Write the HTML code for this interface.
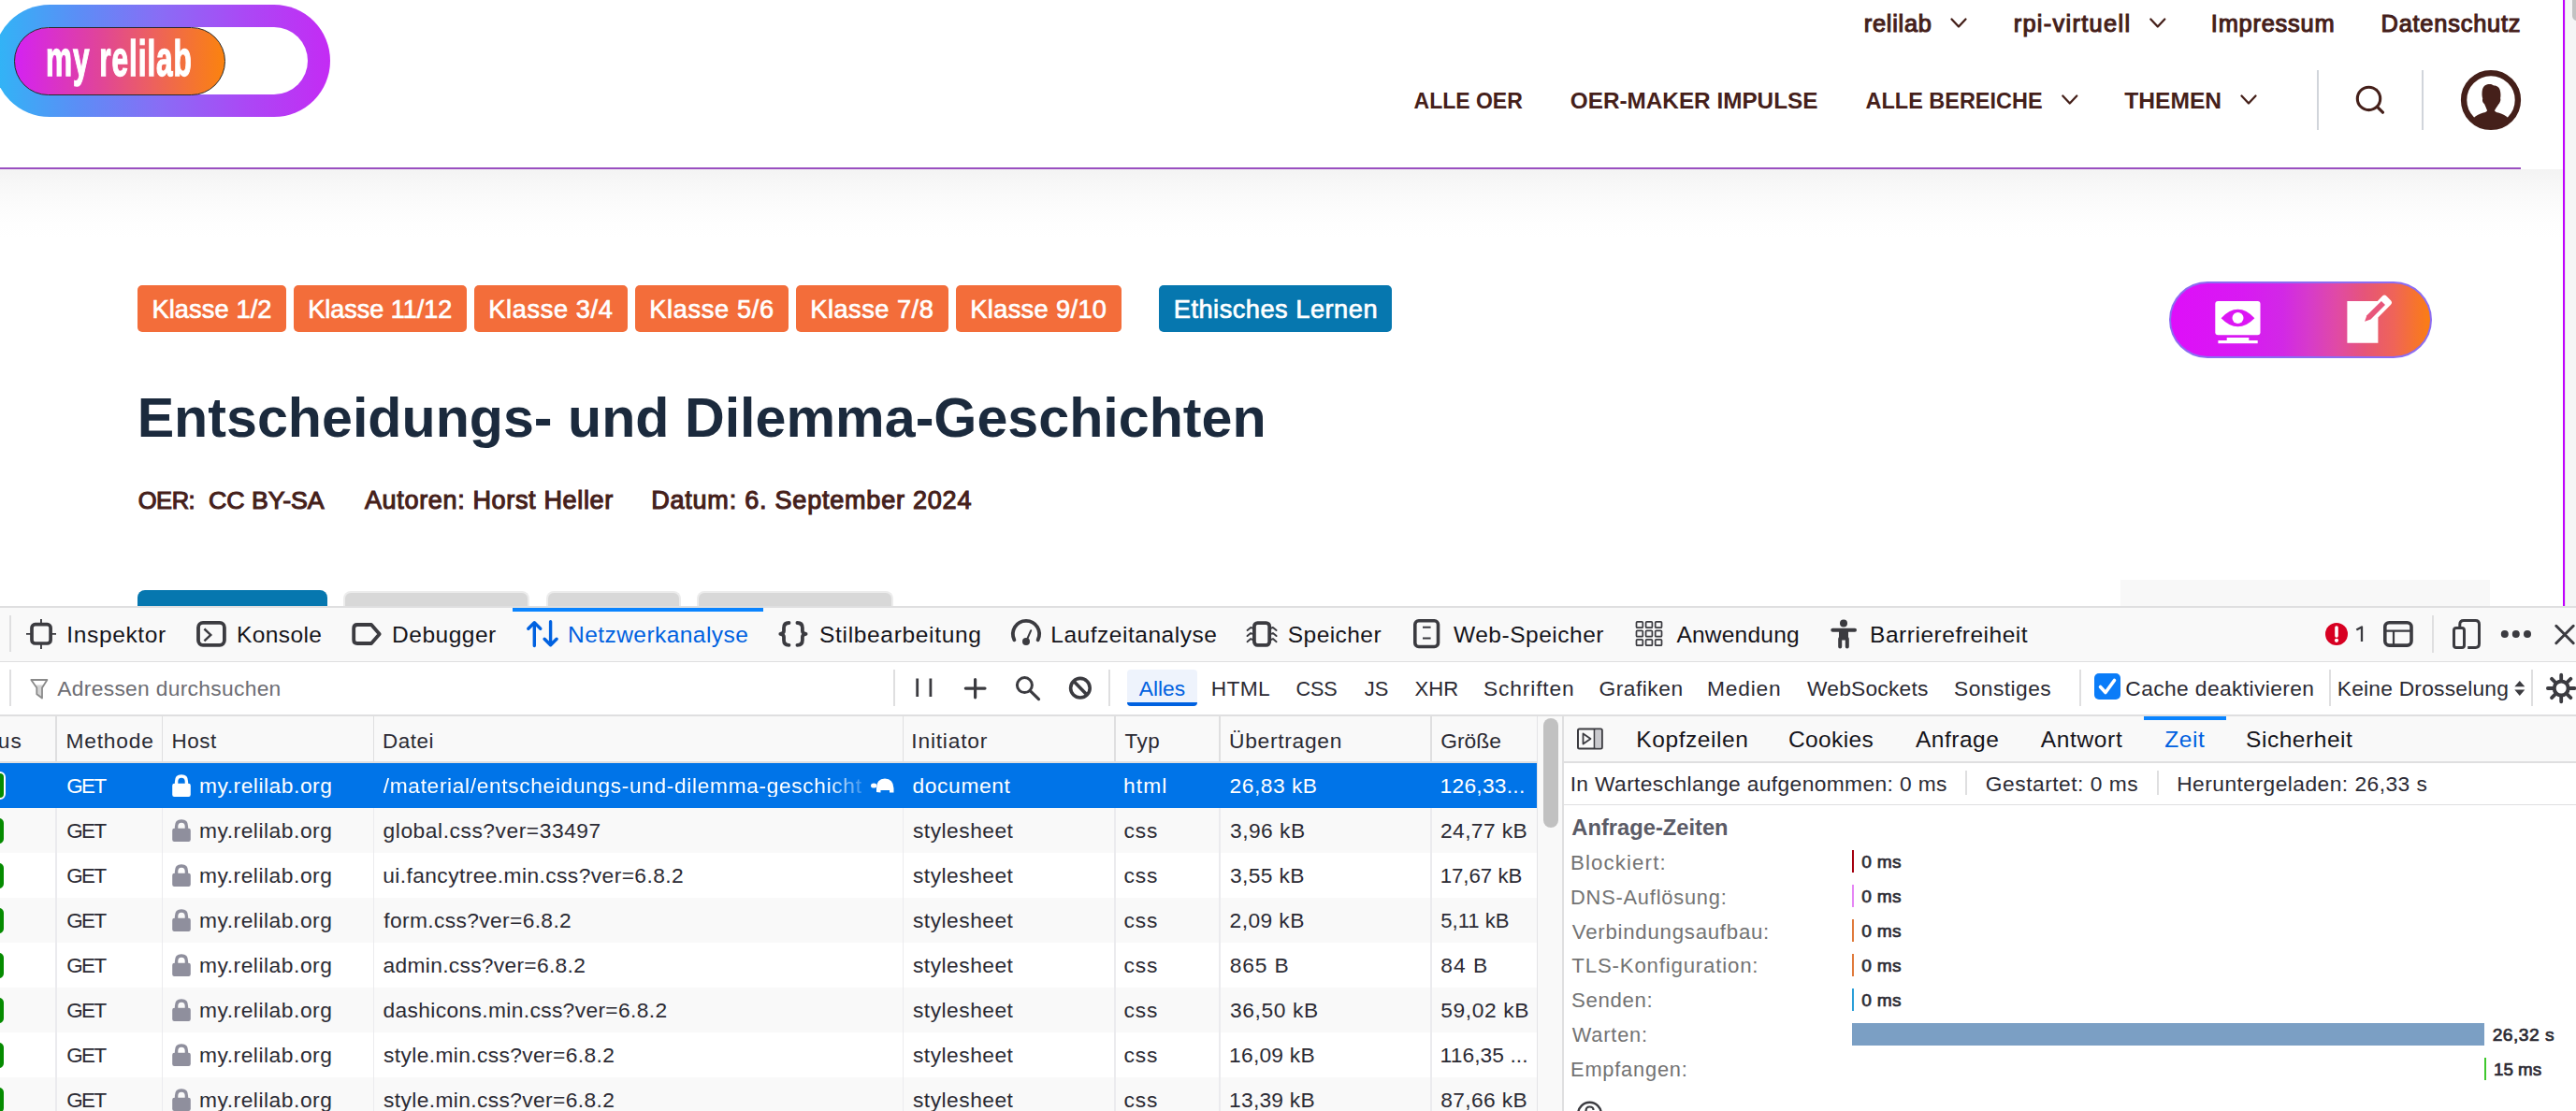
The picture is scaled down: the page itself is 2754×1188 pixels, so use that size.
<!DOCTYPE html>
<html><head><meta charset="utf-8"><style>
html,body{margin:0;padding:0;background:#fff}
#root{position:relative;width:2754px;height:1188px;overflow:hidden;background:#fff;font-family:"Liberation Sans",sans-serif}
.b{position:absolute}
.t{position:absolute;white-space:pre;font-family:"Liberation Sans",sans-serif}
</style></head><body><div id="root">
<div class="b" style="left:0px;top:181px;width:2740px;height:467px;background:linear-gradient(#f3f3f3 0px,#f7f7f7 14px,#fafafa 28px,#fcfcfc 42px,#fefefe 58px,#ffffff 75px);"></div>
<div class="b" style="left:0px;top:179px;width:2695px;height:2px;background:#9a4fc0;"></div>
<div class="b" style="left:2740px;top:0px;width:2px;height:648px;background:#c000ff;"></div>
<div class="b" style="left:2742px;top:0px;width:12px;height:648px;background:#f5f5f6;border-left:1px solid #e6e6e8;box-sizing:border-box"></div>
<div class="b" style="left:2749.7px;top:-12px;width:10px;height:34px;background:#c2c2c2;border-radius:5px"></div>
<div class="b" style="left:-7px;top:5px;width:360px;height:119.5px;background:linear-gradient(90deg,#2fb6f6 0%,#5b8ef6 25%,#8a6cf5 50%,#ab48f5 75%,#c42bf4 100%);border-radius:60px"></div>
<div class="b" style="left:17px;top:29px;width:311.5px;height:72px;background:#ffffff;border-radius:36px"></div>
<div class="b" style="left:15px;top:28.5px;width:226px;height:73px;background:linear-gradient(90deg,#d422f2 0%,#e0449a 40%,#ec6060 65%,#fb830e 100%);border-radius:37px;border:1px solid #2a2a2a;box-sizing:border-box"></div>
<div class="t" style="left:48.5px;top:34.5px;font-size:54px;line-height:54px;font-weight:700;color:#fff;transform-origin:0 0;transform:scaleX(0.585);-webkit-text-stroke:1.4px #fff;letter-spacing:1.6px">my relilab</div>
<div class="b" style="left:2477.1px;top:74.8px;width:1.8px;height:64px;background:#d1d5db;"></div>
<div class="b" style="left:2589.2px;top:74.8px;width:1.8px;height:64px;background:#d1d5db;"></div>
<div class="b" style="left:147.2px;top:305px;width:158.7px;height:49.5px;background:#f36d3a;border-radius:5px"></div>
<div class="b" style="left:314px;top:305px;width:184.7px;height:49.5px;background:#f36d3a;border-radius:5px"></div>
<div class="b" style="left:507px;top:305px;width:163.89999999999998px;height:49.5px;background:#f36d3a;border-radius:5px"></div>
<div class="b" style="left:679px;top:305px;width:163.79999999999995px;height:49.5px;background:#f36d3a;border-radius:5px"></div>
<div class="b" style="left:851px;top:305px;width:162.5px;height:49.5px;background:#f36d3a;border-radius:5px"></div>
<div class="b" style="left:1022px;top:305px;width:176.70000000000005px;height:49.5px;background:#f36d3a;border-radius:5px"></div>
<div class="b" style="left:1239px;top:305px;width:248.9px;height:49.8px;background:#0677af;border-radius:5px"></div>
<div class="b" style="left:147.3px;top:631.2px;width:202.7px;height:20px;background:#0677af;border-radius:8px 8px 0 0"></div>
<div class="b" style="left:366.7px;top:631.5px;width:199.8px;height:20px;background:#d8d8d8;border-radius:8px 8px 0 0;border:2px solid #ececec;border-bottom:0;box-sizing:border-box"></div>
<div class="b" style="left:583.6px;top:631.5px;width:144.39999999999998px;height:20px;background:#d8d8d8;border-radius:8px 8px 0 0;border:2px solid #ececec;border-bottom:0;box-sizing:border-box"></div>
<div class="b" style="left:745px;top:631.5px;width:209.60000000000002px;height:20px;background:#d8d8d8;border-radius:8px 8px 0 0;border:2px solid #ececec;border-bottom:0;box-sizing:border-box"></div>
<div class="b" style="left:2267px;top:619.8px;width:395px;height:30px;background:#f8f8f8;"></div>
<div class="b" style="left:2319.4px;top:300.7px;width:280.7px;height:82.3px;background:linear-gradient(90deg,#de0ff9 0%,#d81af2 28%,#d228e6 43%,#d73cc8 54%,#e04aa5 64%,#e65578 75%,#ef6458 86%,#fb7e12 100%) padding-box, #8c6cf2 border-box;border-radius:42px;border:2px solid transparent;box-sizing:border-box"></div>
<div class="b" style="left:0px;top:648px;width:2754px;height:540px;background:#ffffff;"></div>
<div class="b" style="left:0px;top:648.3px;width:2754px;height:1.8px;background:#dfdfe0;"></div>
<div class="b" style="left:0px;top:650px;width:2754px;height:56.6px;background:#f9f9f9;"></div>
<div class="b" style="left:0px;top:706.6px;width:2754px;height:1.5px;background:#dfdfe0;"></div>
<div class="b" style="left:0px;top:764px;width:2754px;height:1.6px;background:#dfdfe0;"></div>
<div class="b" style="left:0px;top:765.6px;width:1642.5px;height:48.3px;background:#f9f9f9;"></div>
<div class="b" style="left:0px;top:813.9px;width:1642.5px;height:2.1px;background:#dfdfe0;"></div>
<div class="b" style="left:0px;top:816px;width:1642.5px;height:48px;background:#0074e8;"></div>
<div class="b" style="left:0px;top:864px;width:1642.5px;height:48px;background:#f9f9f9;"></div>
<div class="b" style="left:0px;top:912px;width:1642.5px;height:48px;background:#ffffff;"></div>
<div class="b" style="left:0px;top:960px;width:1642.5px;height:48px;background:#f9f9f9;"></div>
<div class="b" style="left:0px;top:1008px;width:1642.5px;height:48px;background:#ffffff;"></div>
<div class="b" style="left:0px;top:1056px;width:1642.5px;height:48px;background:#f9f9f9;"></div>
<div class="b" style="left:0px;top:1104px;width:1642.5px;height:48px;background:#ffffff;"></div>
<div class="b" style="left:0px;top:1152px;width:1642.5px;height:48px;background:#f9f9f9;"></div>
<div class="b" style="left:59.4px;top:765.6px;width:1.6px;height:48.3px;background:#dfdfe0;"></div>
<div class="b" style="left:59.4px;top:864px;width:1.6px;height:324px;background:#ebebee;"></div>
<div class="b" style="left:172.6px;top:765.6px;width:1.6px;height:48.3px;background:#dfdfe0;"></div>
<div class="b" style="left:172.6px;top:864px;width:1.6px;height:324px;background:#ebebee;"></div>
<div class="b" style="left:398.5px;top:765.6px;width:1.6px;height:48.3px;background:#dfdfe0;"></div>
<div class="b" style="left:398.5px;top:864px;width:1.6px;height:324px;background:#ebebee;"></div>
<div class="b" style="left:964.9px;top:765.6px;width:1.6px;height:48.3px;background:#dfdfe0;"></div>
<div class="b" style="left:964.9px;top:864px;width:1.6px;height:324px;background:#ebebee;"></div>
<div class="b" style="left:1191px;top:765.6px;width:1.6px;height:48.3px;background:#dfdfe0;"></div>
<div class="b" style="left:1191px;top:864px;width:1.6px;height:324px;background:#ebebee;"></div>
<div class="b" style="left:1303.2px;top:765.6px;width:1.6px;height:48.3px;background:#dfdfe0;"></div>
<div class="b" style="left:1303.2px;top:864px;width:1.6px;height:324px;background:#ebebee;"></div>
<div class="b" style="left:1529.3px;top:765.6px;width:1.6px;height:48.3px;background:#dfdfe0;"></div>
<div class="b" style="left:1529.3px;top:864px;width:1.6px;height:324px;background:#ebebee;"></div>
<div class="b" style="left:1642.5px;top:765.6px;width:28px;height:422.4px;background:#f9f9f9;"></div>
<div class="b" style="left:1642.5px;top:765.6px;width:1.2px;height:422.4px;background:#e4e4e6;"></div>
<div class="b" style="left:1650.2px;top:768px;width:15.6px;height:117px;background:#c1c1c1;border-radius:8px"></div>
<div class="b" style="left:1670.4px;top:765.6px;width:1.7px;height:422.4px;background:#dfdfe0;"></div>
<div class="b" style="left:1672.1px;top:765.6px;width:1082px;height:48.6px;background:#f9f9f9;"></div>
<div class="b" style="left:1672.1px;top:814.2px;width:1082px;height:1.8px;background:#dfdfe0;"></div>
<div class="b" style="left:1672.1px;top:859.6px;width:1082px;height:1.6px;background:#dfdfe0;"></div>
<div class="b" style="left:2101.3px;top:824px;width:1.6px;height:26px;background:#dfdfe0;"></div>
<div class="b" style="left:2306.2px;top:824px;width:1.6px;height:26px;background:#dfdfe0;"></div>
<div class="b" style="left:2292px;top:766px;width:88px;height:3.8px;background:#0a84ff;"></div>
<div class="b" style="left:548px;top:650px;width:268px;height:3.8px;background:#0a84ff;"></div>
<div class="b" style="left:10.2px;top:658px;width:1.6px;height:39px;background:#dfdfe0;"></div>
<div class="b" style="left:2600.3px;top:658px;width:1.6px;height:39.60000000000002px;background:#dfdfe0;"></div>
<div class="b" style="left:10.2px;top:716px;width:1.6px;height:39.39999999999998px;background:#dfdfe0;"></div>
<div class="b" style="left:955.2px;top:716px;width:1.6px;height:39.39999999999998px;background:#dfdfe0;"></div>
<div class="b" style="left:1185.3px;top:716px;width:1.6px;height:39.39999999999998px;background:#dfdfe0;"></div>
<div class="b" style="left:2223px;top:716px;width:1.6px;height:39.39999999999998px;background:#dfdfe0;"></div>
<div class="b" style="left:2490.1px;top:716px;width:1.6px;height:39.39999999999998px;background:#dfdfe0;"></div>
<div class="b" style="left:2706.3px;top:716px;width:1.6px;height:39.39999999999998px;background:#dfdfe0;"></div>
<div class="b" style="left:1204.8px;top:715.9px;width:75px;height:38.9px;background:#eef3fc;border-radius:4px"></div>
<div class="b" style="left:1204.8px;top:750.8px;width:75px;height:4.1px;background:#0061e0;border-radius:0 0 4px 4px"></div>
<div class="b" style="left:2239px;top:720px;width:27.7px;height:27.7px;background:#0a7cf8;border-radius:5px"></div>
<div class="b" style="left:-14px;top:825.3px;width:19.7px;height:30.2px;background:#058b00;border-radius:6px;border:2px solid #fff;box-sizing:border-box"></div>
<div class="b" style="left:-14px;top:874.9px;width:18.2px;height:26.7px;background:#058b00;border-radius:5px"></div>
<div class="b" style="left:-14px;top:922.9px;width:18.2px;height:26.7px;background:#058b00;border-radius:5px"></div>
<div class="b" style="left:-14px;top:970.9px;width:18.2px;height:26.7px;background:#058b00;border-radius:5px"></div>
<div class="b" style="left:-14px;top:1018.9px;width:18.2px;height:26.7px;background:#058b00;border-radius:5px"></div>
<div class="b" style="left:-14px;top:1066.9px;width:18.2px;height:26.7px;background:#058b00;border-radius:5px"></div>
<div class="b" style="left:-14px;top:1114.9px;width:18.2px;height:26.7px;background:#058b00;border-radius:5px"></div>
<div class="b" style="left:-14px;top:1162.9px;width:18.2px;height:26.7px;background:#058b00;border-radius:5px"></div>
<div class="b" style="left:1980px;top:909.0px;width:2.3px;height:24.1px;background:#a4000f;"></div>
<div class="b" style="left:1980px;top:945.93px;width:2.3px;height:24.1px;background:#e586f5;"></div>
<div class="b" style="left:1980px;top:982.86px;width:2.3px;height:24.1px;background:#e07a3b;"></div>
<div class="b" style="left:1980px;top:1019.79px;width:2.3px;height:24.1px;background:#e07a3b;"></div>
<div class="b" style="left:1980px;top:1056.72px;width:2.3px;height:24.1px;background:#2b9fd8;"></div>
<div class="b" style="left:1980px;top:1094px;width:676px;height:23.8px;background:#7b9fc4;"></div>
<div class="b" style="left:2656px;top:1131px;width:2.2px;height:24px;background:#3fc82e;"></div>
<svg class="b" style="left:0;top:0" width="2754" height="1188" viewBox="0 0 2754 1188"><polyline points="2086.5,20.5 2094.0,28.5 2101.5,20.5" fill="none" stroke="#45201a" stroke-width="2.3" stroke-linecap="round" stroke-linejoin="round"/>
<polyline points="2299.3,20.5 2306.8,28.5 2314.3,20.5" fill="none" stroke="#45201a" stroke-width="2.3" stroke-linecap="round" stroke-linejoin="round"/>
<polyline points="2205.3,102.5 2212.8,110.5 2220.3,102.5" fill="none" stroke="#45201a" stroke-width="2.3" stroke-linecap="round" stroke-linejoin="round"/>
<polyline points="2396.5,102.5 2404.0,110.5 2411.5,102.5" fill="none" stroke="#45201a" stroke-width="2.3" stroke-linecap="round" stroke-linejoin="round"/>
<circle cx="2532.5" cy="105.4" r="12.2" fill="none" stroke="#45201a" stroke-width="3.1"/>
<line x1="2541.6" y1="114.4" x2="2547.4" y2="120.2" stroke="#45201a" stroke-width="3.2" stroke-linecap="round"/>
<defs><clipPath id="avc"><circle cx="2663" cy="107" r="29"/></clipPath></defs>
<circle cx="2663" cy="107" r="28.9" fill="none" stroke="#45201a" stroke-width="6.4"/>
<g clip-path="url(#avc)"><g transform="translate(2625,70)" fill="#45201a"><path d="M34.1,48.3 C33,45.5 31.8,43 31,41 C29.2,39.8 28.6,37.5 29.2,35.2 C28.3,33 28.3,28.5 29,25.5 C30.2,21.5 33,19.9 36.8,19.9 C38.6,19.9 40,20.5 41.2,21.6 C45,21.6 47.6,23.8 48.1,28 C48.6,31 48.5,33 48.1,35 C48.7,37 48.1,39.5 46,41.8 C44.6,44.2 43,46.2 41.9,48.3 C42.6,49.5 44,50.1 46,50.6 C50,51.6 53.8,53.6 56.5,56.3 L62,72 L12,72 L19.5,56.3 C22.3,53.6 26,51.6 30,50.6 C32,50.1 33.5,49.5 34.1,48.3 Z"/></g></g>
<rect x="2368.3" y="322" width="48.2" height="36.2" rx="3" fill="#fff"/>
<path d="M2374.6,340.2 Q2392.5,321.5 2410.4,340.2 Q2392.5,358.5 2374.6,340.2 Z" fill="#dc16f4"/>
<circle cx="2392.5" cy="340" r="6" fill="#fff"/>
<rect x="2380.7" y="361" width="23.6" height="4" fill="#fff"/>
<rect x="2371.4" y="364" width="42.3" height="3.2" fill="#fff"/>
<path d="M2509.4,322 H2541.8 L2546.8,316.8 Q2549.2,314.4 2551.6,316.8 L2556,321.2 Q2558.2,323.6 2555.8,326 L2542.4,339.4 V366.8 H2509.4 Z" fill="#fff"/>
<path d="M2528.1,343.8 L2530.4,337.3 L2545.9,321.9 L2550.0,325.9 L2534.5,341.4 Z" fill="#e8567a"/>
<rect x="34" y="667.7" width="20.1" height="20.3" rx="3.6" fill="none" stroke="#3b3b40" stroke-width="3.7"/>
<path d="M43.95,662 V667 M43.95,689 V694 M28,677.9 H33 M55,677.9 H60" stroke="#3b3b40" stroke-width="1.9"/>
<rect x="212" y="665.9" width="27.9" height="23.9" rx="5" fill="none" stroke="#3b3b40" stroke-width="3.8"/>
<polyline points="218.4,672.5 225.3,678.9 218.4,685.3" fill="none" stroke="#3b3b40" stroke-width="2.4"/>
<path d="M382,668 H397 L405.7,678 L397,688 H382 Q378.2,688 378.2,684.2 V671.8 Q378.2,668 382,668 Z" fill="none" stroke="#3b3b40" stroke-width="3.8" stroke-linejoin="round"/>
<path d="M571.3,666 V690.5 M564.8,672.3 L571.3,665.8 L577.8,672.3 M588.6,664.8 V689.5 M582.1,683.2 L588.6,689.7 L595.1,683.2" fill="none" stroke="#0061e0" stroke-width="3.4" stroke-linecap="round" stroke-linejoin="round"/>
<path d="M843.5,666 Q838,666 838,671.5 V674.8 Q838,677.2 834.3,677.9 Q838,678.6 838,681 V684.5 Q838,689.8 843.5,689.8 M852.4,666 Q857.9,666 857.9,671.5 V674.8 Q857.9,677.2 861.6,677.9 Q857.9,678.6 857.9,681 V684.5 Q857.9,689.8 852.4,689.8" fill="none" stroke="#3b3b40" stroke-width="3.8" stroke-linecap="round" stroke-linejoin="round"/>
<path d="M1084.4,684.3 A14.1,14.1 0 1 1 1109.6,684.3" fill="none" stroke="#3b3b40" stroke-width="3.8" stroke-linecap="round"/>
<line x1="1097" y1="686" x2="1102.2" y2="674.2" stroke="#3b3b40" stroke-width="2" stroke-linecap="round"/>
<circle cx="1097" cy="686" r="4" fill="#3b3b40"/>
<rect x="1340.9" y="666.1" width="16.3" height="23.8" rx="3.6" fill="none" stroke="#3b3b40" stroke-width="3.8"/>
<path d="M1333.5,674.0 L1337.2,670.9 L1339.5,671.9 M1358.6,671.9 L1360.9,670.9 L1364.6,674.0 M1333.5,680.1 L1337.2,677.0 L1339.5,678.0 M1358.6,678.0 L1360.9,677.0 L1364.6,680.1 M1333.5,686.2 L1337.2,683.1 L1339.5,684.1 M1358.6,684.1 L1360.9,683.1 L1364.6,686.2" fill="none" stroke="#3b3b40" stroke-width="1.9" stroke-linecap="round" stroke-linejoin="round"/>
<rect x="1512.8" y="663.8" width="24.7" height="27.7" rx="4" fill="none" stroke="#3b3b40" stroke-width="3.6"/>
<path d="M1521,670.7 H1529.6 M1521,682.6 H1529.6" stroke="#3b3b40" stroke-width="2"/>
<rect x="1749.5" y="664.8" width="6.8" height="6.4" rx="1" fill="none" stroke="#3b3b40" stroke-width="1.7"/>
<rect x="1759.6" y="664.8" width="6.8" height="6.4" rx="1" fill="none" stroke="#3b3b40" stroke-width="1.7"/>
<rect x="1769.7" y="664.8" width="6.8" height="6.4" rx="1" fill="none" stroke="#3b3b40" stroke-width="1.7"/>
<rect x="1749.5" y="674.3" width="6.8" height="6.4" rx="1" fill="none" stroke="#3b3b40" stroke-width="1.7"/>
<rect x="1759.6" y="674.3" width="6.8" height="6.4" rx="1" fill="none" stroke="#3b3b40" stroke-width="1.7"/>
<rect x="1769.7" y="674.3" width="6.8" height="6.4" rx="1" fill="none" stroke="#3b3b40" stroke-width="1.7"/>
<rect x="1749.5" y="683.8" width="6.8" height="6.4" rx="1" fill="none" stroke="#3b3b40" stroke-width="1.7"/>
<rect x="1759.6" y="683.8" width="6.8" height="6.4" rx="1" fill="none" stroke="#3b3b40" stroke-width="1.7"/>
<rect x="1769.7" y="683.8" width="6.8" height="6.4" rx="1" fill="none" stroke="#3b3b40" stroke-width="1.7"/>
<circle cx="1971" cy="666.5" r="4" fill="#3b3b40"/>
<path d="M1959.3,673.8 H1983" stroke="#3b3b40" stroke-width="4" stroke-linecap="round"/>
<rect x="1966" y="673" width="10" height="11.5" fill="#3b3b40"/>
<path d="M1967.2,683 V691.6 M1974.8,683 V691.6" stroke="#3b3b40" stroke-width="4" stroke-linecap="round"/>
<circle cx="2498" cy="677.9" r="12" fill="#d70022"/>
<path d="M2498,671 V680" stroke="#fff" stroke-width="3.6" stroke-linecap="round"/>
<circle cx="2498" cy="684.8" r="2.1" fill="#fff"/>
<path d="M2519.3,673.6 L2525,670.4 V686" fill="none" stroke="#3a3a3f" stroke-width="2.3" stroke-linejoin="round"/>
<rect x="2549.8" y="665.7" width="28.2" height="24.4" rx="4.5" fill="none" stroke="#3b3b40" stroke-width="3.6"/>
<path d="M2549.5,674.6 H2578.3 M2559,674.6 V690.4" stroke="#3b3b40" stroke-width="2.2"/>
<path d="M2629.8,670 V667.5 Q2629.8,663.4 2634,663.4 H2646.6 Q2650.5,663.4 2650.5,667.5 V688.3 Q2650.5,692.4 2646.6,692.4 H2638.2" fill="none" stroke="#3b3b40" stroke-width="3"/>
<rect x="2623.5" y="671.5" width="11" height="21" rx="2.5" fill="none" stroke="#3b3b40" stroke-width="3"/>
<circle cx="2677.8" cy="678" r="4" fill="#3b3b40"/>
<circle cx="2689.8" cy="678" r="4" fill="#3b3b40"/>
<circle cx="2702" cy="678" r="4" fill="#3b3b40"/>
<path d="M2732.8,669.3 L2751.2,687.7 M2751.2,669.3 L2732.8,687.7" stroke="#3b3b40" stroke-width="3" stroke-linecap="round"/>
<path d="M38,732.5 H46.7 L44.6,735.8 V746 L39.3,742.6 V735.8 Z" fill="#d4d4d4"/>
<path d="M33.3,727 H50.4 L45,735.4 V746.5 L39.3,742.2 V735.4 Z" fill="none" stroke="#8a8a8a" stroke-width="1.8" stroke-linejoin="round"/>
<path d="M980.7,725.6 V745 M994.9,725.6 V745" stroke="#3b3b40" stroke-width="2.8"/>
<path d="M1042.6,726.5 V745.8 M1032.3,736.1 H1053" stroke="#3b3b40" stroke-width="3.2" stroke-linecap="round"/>
<circle cx="1095.4" cy="732.6" r="8" fill="none" stroke="#3b3b40" stroke-width="3"/>
<line x1="1101.3" y1="738.6" x2="1110.5" y2="747.6" stroke="#3b3b40" stroke-width="3.2" stroke-linecap="round"/>
<circle cx="1154.9" cy="735.7" r="10.3" fill="none" stroke="#3b3b40" stroke-width="3.6"/>
<line x1="1148" y1="728.6" x2="1161.8" y2="742.8" stroke="#3b3b40" stroke-width="3.6"/>
<polyline points="2245.5,734.5 2251,740.5 2260.5,727.5" fill="none" stroke="#fff" stroke-width="3.6" stroke-linecap="round" stroke-linejoin="round"/>
<path d="M2688.3,734.3 L2693.8,728 L2699.3,734.3 Z M2688.3,737.6 L2693.8,744 L2699.3,737.6 Z" fill="#3b3b40"/>
<path d="M2747.20,736.00 L2752.50,736.00 M2744.56,742.36 L2748.31,746.11 M2738.20,745.00 L2738.20,750.30 M2731.84,742.36 L2728.09,746.11 M2729.20,736.00 L2723.90,736.00 M2731.84,729.64 L2728.09,725.89 M2738.20,727.00 L2738.20,721.70 M2744.56,729.64 L2748.31,725.89" stroke="#3b3b40" stroke-width="3.8" stroke-linecap="round"/>
<circle cx="2738.2" cy="736" r="7.5" fill="none" stroke="#3b3b40" stroke-width="4"/>
<path d="M188.6,838.9 V835.6999999999999 Q188.6,830.0 194,830.0 Q199.4,830.0 199.4,835.6999999999999 V838.9" fill="none" stroke="#ffffff" stroke-width="3.4"/>
<rect x="184.2" y="837.6999999999999" width="19.6" height="14.3" rx="2.2" fill="#ffffff"/>
<path d="M188.6,886.9 V883.6999999999999 Q188.6,878.0 194,878.0 Q199.4,878.0 199.4,883.6999999999999 V886.9" fill="none" stroke="#8f8f9d" stroke-width="3.4"/>
<rect x="184.2" y="885.6999999999999" width="19.6" height="14.3" rx="2.2" fill="#8f8f9d"/>
<path d="M188.6,934.9 V931.6999999999999 Q188.6,926.0 194,926.0 Q199.4,926.0 199.4,931.6999999999999 V934.9" fill="none" stroke="#8f8f9d" stroke-width="3.4"/>
<rect x="184.2" y="933.6999999999999" width="19.6" height="14.3" rx="2.2" fill="#8f8f9d"/>
<path d="M188.6,982.9 V979.6999999999999 Q188.6,974.0 194,974.0 Q199.4,974.0 199.4,979.6999999999999 V982.9" fill="none" stroke="#8f8f9d" stroke-width="3.4"/>
<rect x="184.2" y="981.6999999999999" width="19.6" height="14.3" rx="2.2" fill="#8f8f9d"/>
<path d="M188.6,1030.9 V1027.7 Q188.6,1022.0 194,1022.0 Q199.4,1022.0 199.4,1027.7 V1030.9" fill="none" stroke="#8f8f9d" stroke-width="3.4"/>
<rect x="184.2" y="1029.7" width="19.6" height="14.3" rx="2.2" fill="#8f8f9d"/>
<path d="M188.6,1078.9 V1075.7 Q188.6,1070.0 194,1070.0 Q199.4,1070.0 199.4,1075.7 V1078.9" fill="none" stroke="#8f8f9d" stroke-width="3.4"/>
<rect x="184.2" y="1077.7" width="19.6" height="14.3" rx="2.2" fill="#8f8f9d"/>
<path d="M188.6,1126.9 V1123.7 Q188.6,1118.0 194,1118.0 Q199.4,1118.0 199.4,1123.7 V1126.9" fill="none" stroke="#8f8f9d" stroke-width="3.4"/>
<rect x="184.2" y="1125.7" width="19.6" height="14.3" rx="2.2" fill="#8f8f9d"/>
<path d="M188.6,1174.9 V1171.7 Q188.6,1166.0 194,1166.0 Q199.4,1166.0 199.4,1171.7 V1174.9" fill="none" stroke="#8f8f9d" stroke-width="3.4"/>
<rect x="184.2" y="1173.7" width="19.6" height="14.3" rx="2.2" fill="#8f8f9d"/>
<path d="M937,847 V843 Q937,832.5 946,832.5 Q955,832.5 955.5,843 V847.5 H951 V845 H941.5 V847.5 Z" fill="#fff"/>
<ellipse cx="934.2" cy="840" rx="3.2" ry="2.6" fill="#fff"/>
<rect x="1687" y="779.5" width="25.8" height="21" rx="1.5" fill="none" stroke="#3b3b40" stroke-width="2"/>
<rect x="1705.5" y="780.5" width="6.3" height="19" fill="#c9c9cd"/>
<path d="M1704.5,779.5 V800.5" stroke="#3b3b40" stroke-width="1.6"/>
<path d="M1692.5,784.5 L1700.5,790 L1692.5,795.5 Z" fill="none" stroke="#3b3b40" stroke-width="1.8" stroke-linejoin="round"/>
<circle cx="1699.5" cy="1191" r="12.3" fill="none" stroke="#3b3b40" stroke-width="2.4"/>
<path d="M1695.5,1188 Q1695.5,1183.5 1699.5,1183.5 Q1703.5,1183.5 1703.5,1187" fill="none" stroke="#3b3b40" stroke-width="2.2"/></svg>
<div class="t" style="left:1992.73px;top:13.00px;font-size:25.38px;line-height:25.38px;color:#45201a;-webkit-text-stroke:1.1px #45201a;letter-spacing:0.756px;">relilab</div>
<div class="t" style="left:2152.63px;top:13.00px;font-size:25.38px;line-height:25.38px;color:#45201a;-webkit-text-stroke:1.1px #45201a;letter-spacing:1.311px;">rpi-virtuell</div>
<div class="t" style="left:2363.87px;top:13.00px;font-size:25.38px;line-height:25.38px;color:#45201a;-webkit-text-stroke:1.1px #45201a;letter-spacing:0.773px;">Impressum</div>
<div class="t" style="left:2545.52px;top:13.00px;font-size:25.38px;line-height:25.38px;color:#45201a;-webkit-text-stroke:1.1px #45201a;letter-spacing:0.789px;">Datenschutz</div>
<div class="t" style="left:1511.54px;top:97.00px;font-size:23.01px;line-height:23.01px;color:#45201a;font-weight:700;">ALLE OER</div>
<div class="t" style="left:1678.83px;top:96.00px;font-size:24.30px;line-height:24.30px;color:#45201a;font-weight:700;">OER-MAKER IMPULSE</div>
<div class="t" style="left:1994.53px;top:97.00px;font-size:23.48px;line-height:23.48px;color:#45201a;font-weight:700;">ALLE BEREICHE</div>
<div class="t" style="left:2271.25px;top:96.00px;font-size:24.60px;line-height:24.60px;color:#45201a;font-weight:700;">THEMEN</div>
<div class="t" style="left:162.48px;top:317.00px;font-size:27.17px;line-height:27.17px;color:#ffffff;-webkit-text-stroke:0.7px #ffffff;letter-spacing:0.130px;">Klasse 1/2</div>
<div class="t" style="left:329.29px;top:318.00px;font-size:26.98px;line-height:26.98px;color:#ffffff;-webkit-text-stroke:0.7px #ffffff;">Klasse 11/12</div>
<div class="t" style="left:522.28px;top:317.00px;font-size:27.17px;line-height:27.17px;color:#ffffff;-webkit-text-stroke:0.7px #ffffff;letter-spacing:0.647px;">Klasse 3/4</div>
<div class="t" style="left:694.28px;top:317.00px;font-size:27.17px;line-height:27.17px;color:#ffffff;-webkit-text-stroke:0.7px #ffffff;letter-spacing:0.666px;">Klasse 5/6</div>
<div class="t" style="left:866.28px;top:317.00px;font-size:27.17px;line-height:27.17px;color:#ffffff;-webkit-text-stroke:0.7px #ffffff;letter-spacing:0.522px;">Klasse 7/8</div>
<div class="t" style="left:1037.28px;top:317.00px;font-size:27.17px;line-height:27.17px;color:#ffffff;-webkit-text-stroke:0.7px #ffffff;letter-spacing:0.379px;">Klasse 9/10</div>
<div class="t" style="left:1254.78px;top:317.00px;font-size:27.17px;line-height:27.17px;color:#ffffff;-webkit-text-stroke:0.7px #ffffff;letter-spacing:0.525px;">Ethisches Lernen</div>
<div class="t" style="left:146.65px;top:417.00px;font-size:59.19px;line-height:59.19px;color:#1b2a3d;font-weight:700;">Entscheidungs- und Dilemma-Geschichten</div>
<div class="t" style="left:147.73px;top:523.00px;font-size:25.44px;line-height:25.44px;color:#45201a;-webkit-text-stroke:1.1px #45201a;letter-spacing:-0.419px;">OER:</div>
<div class="t" style="left:223.12px;top:522.00px;font-size:26.67px;line-height:26.67px;color:#45201a;-webkit-text-stroke:1.1px #45201a;">CC BY-SA</div>
<div class="t" style="left:389.95px;top:522.00px;font-size:27.02px;line-height:27.02px;color:#45201a;-webkit-text-stroke:1.1px #45201a;letter-spacing:0.654px;">Autoren: Horst Heller</div>
<div class="t" style="left:696.19px;top:522.00px;font-size:27.02px;line-height:27.02px;color:#45201a;-webkit-text-stroke:1.1px #45201a;letter-spacing:0.776px;">Datum: 6. September 2024</div>
<div class="t" style="left:71.29px;top:667.00px;font-size:24.54px;line-height:24.54px;color:#15141a;letter-spacing:0.636px;">Inspektor</div>
<div class="t" style="left:253.04px;top:667.00px;font-size:24.54px;line-height:24.54px;color:#15141a;letter-spacing:0.362px;">Konsole</div>
<div class="t" style="left:419.04px;top:667.00px;font-size:24.54px;line-height:24.54px;color:#15141a;letter-spacing:0.501px;">Debugger</div>
<div class="t" style="left:607.04px;top:667.00px;font-size:24.54px;line-height:24.54px;color:#0061e0;letter-spacing:0.429px;">Netzwerkanalyse</div>
<div class="t" style="left:876.02px;top:667.00px;font-size:24.54px;line-height:24.54px;color:#15141a;letter-spacing:0.661px;">Stilbearbeitung</div>
<div class="t" style="left:1123.24px;top:667.00px;font-size:24.54px;line-height:24.54px;color:#15141a;letter-spacing:0.509px;">Laufzeitanalyse</div>
<div class="t" style="left:1376.82px;top:667.00px;font-size:24.54px;line-height:24.54px;color:#15141a;letter-spacing:0.421px;">Speicher</div>
<div class="t" style="left:1554.00px;top:667.00px;font-size:24.54px;line-height:24.54px;color:#15141a;letter-spacing:0.499px;">Web-Speicher</div>
<div class="t" style="left:1792.40px;top:667.00px;font-size:24.54px;line-height:24.54px;color:#15141a;letter-spacing:0.207px;">Anwendung</div>
<div class="t" style="left:1999.04px;top:667.00px;font-size:24.54px;line-height:24.54px;color:#15141a;letter-spacing:0.512px;">Barrierefreiheit</div>
<div class="t" style="left:61.30px;top:725.00px;font-size:22.77px;line-height:22.77px;color:#6d6d73;letter-spacing:0.322px;">Adressen durchsuchen</div>
<div class="t" style="left:1217.80px;top:725.00px;font-size:22.77px;line-height:22.77px;color:#0061e0;">Alles</div>
<div class="t" style="left:1294.68px;top:725.00px;font-size:22.77px;line-height:22.77px;color:#2b2a33;letter-spacing:0.315px;">HTML</div>
<div class="t" style="left:1385.62px;top:726.00px;font-size:21.65px;line-height:21.65px;color:#2b2a33;letter-spacing:-0.165px;">CSS</div>
<div class="t" style="left:1458.78px;top:726.00px;font-size:21.88px;line-height:21.88px;color:#2b2a33;">JS</div>
<div class="t" style="left:1512.56px;top:726.00px;font-size:22.06px;line-height:22.06px;color:#2b2a33;">XHR</div>
<div class="t" style="left:1585.89px;top:725.00px;font-size:22.77px;line-height:22.77px;color:#2b2a33;letter-spacing:0.881px;">Schriften</div>
<div class="t" style="left:1709.56px;top:725.00px;font-size:22.77px;line-height:22.77px;color:#2b2a33;letter-spacing:0.497px;">Grafiken</div>
<div class="t" style="left:1824.88px;top:725.00px;font-size:22.77px;line-height:22.77px;color:#2b2a33;letter-spacing:0.847px;">Medien</div>
<div class="t" style="left:1932.00px;top:725.00px;font-size:22.77px;line-height:22.77px;color:#2b2a33;letter-spacing:0.223px;">WebSockets</div>
<div class="t" style="left:2089.09px;top:725.00px;font-size:22.77px;line-height:22.77px;color:#2b2a33;letter-spacing:0.452px;">Sonstiges</div>
<div class="t" style="left:2272.36px;top:725.00px;font-size:22.77px;line-height:22.77px;color:#2b2a33;letter-spacing:0.396px;">Cache deaktivieren</div>
<div class="t" style="left:2498.78px;top:725.00px;font-size:22.77px;line-height:22.77px;color:#2b2a33;letter-spacing:0.227px;">Keine Drosselung</div>
<div class="t" style="left:-2.37px;top:781.00px;font-size:22.77px;line-height:22.77px;color:#2b2a33;letter-spacing:1.305px;">us</div>
<div class="t" style="left:70.48px;top:781.00px;font-size:22.77px;line-height:22.77px;color:#2b2a33;letter-spacing:0.792px;">Methode</div>
<div class="t" style="left:183.41px;top:782.00px;font-size:22.40px;line-height:22.40px;color:#2b2a33;letter-spacing:0.600px;">Host</div>
<div class="t" style="left:408.91px;top:782.00px;font-size:22.40px;line-height:22.40px;color:#2b2a33;letter-spacing:0.600px;">Datei</div>
<div class="t" style="left:974.35px;top:781.00px;font-size:22.77px;line-height:22.77px;color:#2b2a33;letter-spacing:0.786px;">Initiator</div>
<div class="t" style="left:1202.45px;top:782.00px;font-size:22.40px;line-height:22.40px;color:#2b2a33;letter-spacing:0.600px;">Typ</div>
<div class="t" style="left:1314.11px;top:781.00px;font-size:22.77px;line-height:22.77px;color:#2b2a33;letter-spacing:0.698px;">Übertragen</div>
<div class="t" style="left:1540.26px;top:781.00px;font-size:22.77px;line-height:22.77px;color:#2b2a33;letter-spacing:0.011px;">Größe</div>
<div class="t" style="left:1749.34px;top:779.00px;font-size:24.54px;line-height:24.54px;color:#15141a;letter-spacing:0.561px;">Kopfzeilen</div>
<div class="t" style="left:1912.07px;top:779.00px;font-size:24.54px;line-height:24.54px;color:#15141a;letter-spacing:0.335px;">Cookies</div>
<div class="t" style="left:2048.00px;top:779.00px;font-size:24.54px;line-height:24.54px;color:#15141a;letter-spacing:0.490px;">Anfrage</div>
<div class="t" style="left:2181.70px;top:779.00px;font-size:24.54px;line-height:24.54px;color:#15141a;letter-spacing:0.643px;">Antwort</div>
<div class="t" style="left:2314.26px;top:779.00px;font-size:24.54px;line-height:24.54px;color:#0061e0;letter-spacing:0.592px;">Zeit</div>
<div class="t" style="left:2401.02px;top:779.00px;font-size:24.54px;line-height:24.54px;color:#15141a;letter-spacing:0.534px;">Sicherheit</div>
<div class="t" style="left:1678.65px;top:827.00px;font-size:22.77px;line-height:22.77px;color:#2b2a33;letter-spacing:0.381px;">In Warteschlange aufgenommen: 0 ms</div>
<div class="t" style="left:2122.86px;top:827.00px;font-size:22.77px;line-height:22.77px;color:#2b2a33;letter-spacing:0.515px;">Gestartet: 0 ms</div>
<div class="t" style="left:2327.18px;top:827.00px;font-size:22.77px;line-height:22.77px;color:#2b2a33;letter-spacing:0.469px;">Heruntergeladen: 26,33 s</div>
<div class="t" style="left:1680.33px;top:874.00px;font-size:23.71px;line-height:23.71px;color:#5b5b66;font-weight:700;">Anfrage-Zeiten</div>
<div class="t" style="left:1679.02px;top:912.00px;font-size:22.24px;line-height:22.24px;color:#737373;letter-spacing:1.130px;">Blockiert:</div>
<div class="t" style="left:1679.06px;top:949.00px;font-size:21.80px;line-height:21.80px;color:#737373;letter-spacing:0.800px;">DNS-Auflösung:</div>
<div class="t" style="left:1680.80px;top:986.00px;font-size:22.24px;line-height:22.24px;color:#737373;letter-spacing:0.746px;">Verbindungsaufbau:</div>
<div class="t" style="left:1680.36px;top:1022.00px;font-size:22.24px;line-height:22.24px;color:#737373;letter-spacing:0.809px;">TLS-Konfiguration:</div>
<div class="t" style="left:1679.91px;top:1059.00px;font-size:22.24px;line-height:22.24px;color:#737373;letter-spacing:0.663px;">Senden:</div>
<div class="t" style="left:1680.80px;top:1096.00px;font-size:21.80px;line-height:21.80px;color:#737373;letter-spacing:0.800px;">Warten:</div>
<div class="t" style="left:1679.06px;top:1133.00px;font-size:21.80px;line-height:21.80px;color:#737373;letter-spacing:0.800px;">Empfangen:</div>
<div class="t" style="left:1990.28px;top:912.00px;font-size:19.11px;line-height:19.11px;color:#2b2a33;-webkit-text-stroke:0.7px #2b2a33;letter-spacing:0.280px;">0 ms</div>
<div class="t" style="left:1990.28px;top:949.00px;font-size:19.11px;line-height:19.11px;color:#2b2a33;-webkit-text-stroke:0.7px #2b2a33;letter-spacing:0.280px;">0 ms</div>
<div class="t" style="left:1990.28px;top:986.00px;font-size:19.11px;line-height:19.11px;color:#2b2a33;-webkit-text-stroke:0.7px #2b2a33;letter-spacing:0.280px;">0 ms</div>
<div class="t" style="left:1990.28px;top:1023.00px;font-size:19.11px;line-height:19.11px;color:#2b2a33;-webkit-text-stroke:0.7px #2b2a33;letter-spacing:0.280px;">0 ms</div>
<div class="t" style="left:1990.28px;top:1060.00px;font-size:19.11px;line-height:19.11px;color:#2b2a33;-webkit-text-stroke:0.7px #2b2a33;letter-spacing:0.280px;">0 ms</div>
<div class="t" style="left:2664.69px;top:1097.00px;font-size:19.26px;line-height:19.26px;color:#2b2a33;-webkit-text-stroke:0.7px #2b2a33;letter-spacing:0.462px;">26,32 s</div>
<div class="t" style="left:2666.03px;top:1135.00px;font-size:18.79px;line-height:18.79px;color:#2b2a33;-webkit-text-stroke:0.7px #2b2a33;">15 ms</div>
<div class="t" style="left:71.18px;top:830.00px;font-size:22.42px;line-height:22.42px;color:#ffffff;letter-spacing:-1.502px;">GET</div>
<div class="t" style="left:212.93px;top:829.00px;font-size:22.77px;line-height:22.77px;color:#ffffff;letter-spacing:0.538px;">my.relilab.org</div>
<div class="t" style="left:409.80px;top:829.00px;font-size:22.77px;line-height:22.77px;color:#ffffff;letter-spacing:0.632px;width:515.2px;overflow:hidden;-webkit-mask-image:linear-gradient(90deg,#000 0,#000 475.2px,rgba(0,0,0,0.15) 515.2px);">/material/entscheidungs-und-dilemma-geschicht</div>
<div class="t" style="left:975.49px;top:829.00px;font-size:22.77px;line-height:22.77px;color:#ffffff;letter-spacing:0.641px;">document</div>
<div class="t" style="left:1200.93px;top:829.00px;font-size:22.77px;line-height:22.77px;color:#ffffff;letter-spacing:1.158px;">html</div>
<div class="t" style="left:1314.56px;top:829.00px;font-size:22.77px;line-height:22.77px;color:#ffffff;letter-spacing:0.521px;">26,83 kB</div>
<div class="t" style="left:1539.61px;top:829.00px;font-size:22.77px;line-height:22.77px;color:#ffffff;letter-spacing:0.249px;">126,33...</div>
<div class="t" style="left:71.18px;top:878.00px;font-size:22.42px;line-height:22.42px;color:#2b2a33;letter-spacing:-1.502px;">GET</div>
<div class="t" style="left:212.93px;top:877.00px;font-size:22.77px;line-height:22.77px;color:#2b2a33;letter-spacing:0.538px;">my.relilab.org</div>
<div class="t" style="left:409.59px;top:877.00px;font-size:22.77px;line-height:22.77px;color:#2b2a33;letter-spacing:0.555px;">global.css?ver=33497</div>
<div class="t" style="left:975.94px;top:877.00px;font-size:22.77px;line-height:22.77px;color:#2b2a33;letter-spacing:0.501px;">stylesheet</div>
<div class="t" style="left:1201.39px;top:877.00px;font-size:22.77px;line-height:22.77px;color:#2b2a33;letter-spacing:0.973px;">css</div>
<div class="t" style="left:1315.02px;top:877.00px;font-size:22.77px;line-height:22.77px;color:#2b2a33;letter-spacing:0.476px;">3,96 kB</div>
<div class="t" style="left:1540.06px;top:877.00px;font-size:22.77px;line-height:22.77px;color:#2b2a33;letter-spacing:0.393px;">24,77 kB</div>
<div class="t" style="left:71.18px;top:926.00px;font-size:22.42px;line-height:22.42px;color:#2b2a33;letter-spacing:-1.502px;">GET</div>
<div class="t" style="left:212.93px;top:925.00px;font-size:22.77px;line-height:22.77px;color:#2b2a33;letter-spacing:0.538px;">my.relilab.org</div>
<div class="t" style="left:409.13px;top:925.00px;font-size:22.77px;line-height:22.77px;color:#2b2a33;letter-spacing:0.419px;">ui.fancytree.min.css?ver=6.8.2</div>
<div class="t" style="left:975.94px;top:925.00px;font-size:22.77px;line-height:22.77px;color:#2b2a33;letter-spacing:0.501px;">stylesheet</div>
<div class="t" style="left:1201.39px;top:925.00px;font-size:22.77px;line-height:22.77px;color:#2b2a33;letter-spacing:0.973px;">css</div>
<div class="t" style="left:1315.02px;top:925.00px;font-size:22.77px;line-height:22.77px;color:#2b2a33;letter-spacing:0.359px;">3,55 kB</div>
<div class="t" style="left:1539.64px;top:926.00px;font-size:22.22px;line-height:22.22px;color:#2b2a33;">17,67 kB</div>
<div class="t" style="left:71.18px;top:974.00px;font-size:22.42px;line-height:22.42px;color:#2b2a33;letter-spacing:-1.502px;">GET</div>
<div class="t" style="left:212.93px;top:973.00px;font-size:22.77px;line-height:22.77px;color:#2b2a33;letter-spacing:0.538px;">my.relilab.org</div>
<div class="t" style="left:410.27px;top:973.00px;font-size:22.77px;line-height:22.77px;color:#2b2a33;letter-spacing:0.368px;">form.css?ver=6.8.2</div>
<div class="t" style="left:975.94px;top:973.00px;font-size:22.77px;line-height:22.77px;color:#2b2a33;letter-spacing:0.501px;">stylesheet</div>
<div class="t" style="left:1201.39px;top:973.00px;font-size:22.77px;line-height:22.77px;color:#2b2a33;letter-spacing:0.973px;">css</div>
<div class="t" style="left:1314.56px;top:973.00px;font-size:22.77px;line-height:22.77px;color:#2b2a33;letter-spacing:0.435px;">2,09 kB</div>
<div class="t" style="left:1540.32px;top:974.00px;font-size:22.04px;line-height:22.04px;color:#2b2a33;">5,11 kB</div>
<div class="t" style="left:71.18px;top:1022.00px;font-size:22.42px;line-height:22.42px;color:#2b2a33;letter-spacing:-1.502px;">GET</div>
<div class="t" style="left:212.93px;top:1021.00px;font-size:22.77px;line-height:22.77px;color:#2b2a33;letter-spacing:0.538px;">my.relilab.org</div>
<div class="t" style="left:409.59px;top:1021.00px;font-size:22.77px;line-height:22.77px;color:#2b2a33;letter-spacing:0.310px;">admin.css?ver=6.8.2</div>
<div class="t" style="left:975.94px;top:1021.00px;font-size:22.77px;line-height:22.77px;color:#2b2a33;letter-spacing:0.501px;">stylesheet</div>
<div class="t" style="left:1201.39px;top:1021.00px;font-size:22.77px;line-height:22.77px;color:#2b2a33;letter-spacing:0.973px;">css</div>
<div class="t" style="left:1314.79px;top:1021.00px;font-size:22.77px;line-height:22.77px;color:#2b2a33;letter-spacing:0.822px;">865 B</div>
<div class="t" style="left:1540.29px;top:1021.00px;font-size:22.77px;line-height:22.77px;color:#2b2a33;letter-spacing:0.983px;">84 B</div>
<div class="t" style="left:71.18px;top:1070.00px;font-size:22.42px;line-height:22.42px;color:#2b2a33;letter-spacing:-1.502px;">GET</div>
<div class="t" style="left:212.93px;top:1069.00px;font-size:22.77px;line-height:22.77px;color:#2b2a33;letter-spacing:0.538px;">my.relilab.org</div>
<div class="t" style="left:409.59px;top:1069.00px;font-size:22.77px;line-height:22.77px;color:#2b2a33;letter-spacing:0.356px;">dashicons.min.css?ver=6.8.2</div>
<div class="t" style="left:975.94px;top:1069.00px;font-size:22.77px;line-height:22.77px;color:#2b2a33;letter-spacing:0.501px;">stylesheet</div>
<div class="t" style="left:1201.39px;top:1069.00px;font-size:22.77px;line-height:22.77px;color:#2b2a33;letter-spacing:0.973px;">css</div>
<div class="t" style="left:1315.02px;top:1069.00px;font-size:22.77px;line-height:22.77px;color:#2b2a33;letter-spacing:0.599px;">36,50 kB</div>
<div class="t" style="left:1540.29px;top:1069.00px;font-size:22.77px;line-height:22.77px;color:#2b2a33;letter-spacing:0.603px;">59,02 kB</div>
<div class="t" style="left:71.18px;top:1118.00px;font-size:22.42px;line-height:22.42px;color:#2b2a33;letter-spacing:-1.502px;">GET</div>
<div class="t" style="left:212.93px;top:1117.00px;font-size:22.77px;line-height:22.77px;color:#2b2a33;letter-spacing:0.538px;">my.relilab.org</div>
<div class="t" style="left:410.04px;top:1117.00px;font-size:22.77px;line-height:22.77px;color:#2b2a33;letter-spacing:0.377px;">style.min.css?ver=6.8.2</div>
<div class="t" style="left:975.94px;top:1117.00px;font-size:22.77px;line-height:22.77px;color:#2b2a33;letter-spacing:0.501px;">stylesheet</div>
<div class="t" style="left:1201.39px;top:1117.00px;font-size:22.77px;line-height:22.77px;color:#2b2a33;letter-spacing:0.973px;">css</div>
<div class="t" style="left:1314.11px;top:1117.00px;font-size:22.77px;line-height:22.77px;color:#2b2a33;letter-spacing:0.229px;">16,09 kB</div>
<div class="t" style="left:1539.61px;top:1117.00px;font-size:22.77px;line-height:22.77px;color:#2b2a33;letter-spacing:0.084px;">116,35 ...</div>
<div class="t" style="left:71.18px;top:1166.00px;font-size:22.42px;line-height:22.42px;color:#2b2a33;letter-spacing:-1.502px;">GET</div>
<div class="t" style="left:212.93px;top:1165.00px;font-size:22.77px;line-height:22.77px;color:#2b2a33;letter-spacing:0.538px;">my.relilab.org</div>
<div class="t" style="left:410.04px;top:1165.00px;font-size:22.77px;line-height:22.77px;color:#2b2a33;letter-spacing:0.377px;">style.min.css?ver=6.8.2</div>
<div class="t" style="left:975.94px;top:1165.00px;font-size:22.77px;line-height:22.77px;color:#2b2a33;letter-spacing:0.501px;">stylesheet</div>
<div class="t" style="left:1201.39px;top:1165.00px;font-size:22.77px;line-height:22.77px;color:#2b2a33;letter-spacing:0.973px;">css</div>
<div class="t" style="left:1314.11px;top:1165.00px;font-size:22.77px;line-height:22.77px;color:#2b2a33;letter-spacing:0.229px;">13,39 kB</div>
<div class="t" style="left:1540.29px;top:1165.00px;font-size:22.77px;line-height:22.77px;color:#2b2a33;letter-spacing:0.360px;">87,66 kB</div>
</div></body></html>
